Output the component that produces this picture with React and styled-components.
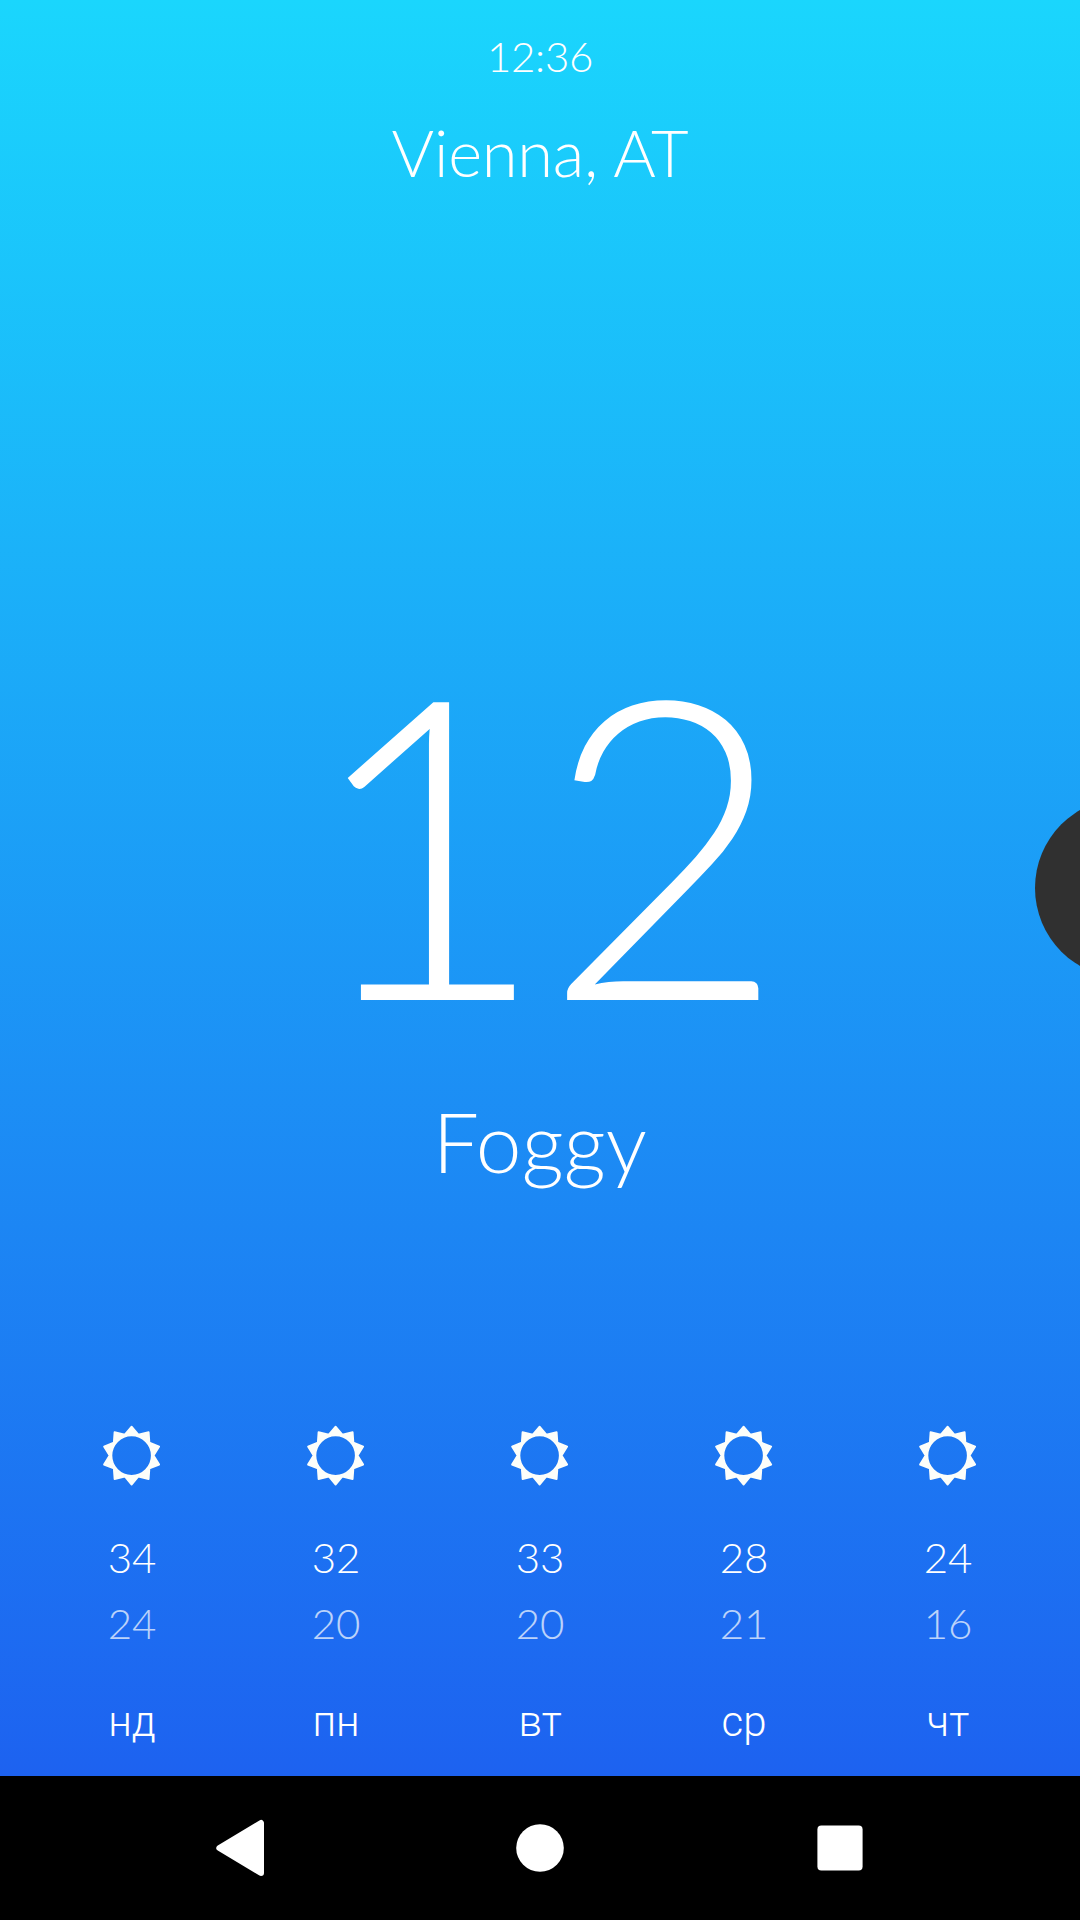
import React from "react";
import styled, { createGlobalStyle } from "styled-components";

const GlobalStyle = createGlobalStyle`
  html, body { margin: 0; padding: 0; background: #000; }
  *, *::before, *::after { box-sizing: border-box; }
`;

const Screen = styled.div`
  position: relative;
  display: flex;
  flex-direction: column;
  width: 1080px;
  height: 1920px;
  overflow: hidden;
  color: #fff;
  font-family: Lato, "Liberation Sans", sans-serif;
  font-weight: 300;
`;

const Weather = styled.main`
  flex: 1;
  display: flex;
  flex-direction: column;
  align-items: center;
  padding-top: 31px;
  background: linear-gradient(180deg, #1ad6fd 0%, #1d62f0 100%);
`;

const Clock = styled.time`
  font-size: 42px;
  line-height: 50px;
  letter-spacing: -0.3px;
`;

const City = styled.h1`
  margin: 31px 0 0;
  font-size: 65px;
  font-weight: 300;
  line-height: 80px;
  letter-spacing: -0.25px;
`;

const Temperature = styled.div`
  margin-top: 440px;
  padding-left: 6px;
  font-size: 419px;
  line-height: 412px;
  letter-spacing: -5px;
`;

const Condition = styled.div`
  margin-top: 47px;
  font-size: 82px;
  line-height: 100px;
  letter-spacing: 0.3px;
`;

const Forecast = styled.section`
  display: grid;
  grid-template-columns: repeat(5, 204px);
  margin-top: 234px;
`;

const Day = styled.article`
  display: flex;
  flex-direction: column;
  align-items: center;
`;

const SunIcon = styled.svg`
  width: 62px;
  height: 62px;
  margin: 0 1px 37px 0;
`;

const Degrees = styled.span`
  font-size: 42px;
  line-height: 66px;
  opacity: ${(p) => (p.$low ? 0.7 : 1)};
`;

const Weekday = styled.span`
  margin-top: 41px;
  font-family: Roboto, "Liberation Sans", sans-serif;
  font-size: 42px;
  line-height: 50px;
`;

const FloatingBubble = styled.div`
  position: absolute;
  top: 798px;
  left: 1035px;
  width: 180px;
  height: 180px;
  border-radius: 50%;
  background: #303030;
`;

const NavBar = styled.nav`
  display: flex;
  justify-content: center;
  align-items: center;
  height: 144px;
  background: #000;
`;

const NavButton = styled.button`
  display: flex;
  justify-content: center;
  align-items: center;
  width: 300px;
  height: 144px;
  padding: 0;
  border: 0;
  background: transparent;
`;

const days = [
  { name: "нд", high: 34, low: 24 },
  { name: "пн", high: 32, low: 20 },
  { name: "вт", high: 33, low: 20 },
  { name: "ср", high: 28, low: 21 },
  { name: "чт", high: 24, low: 16 },
];

const rays = Array.from({ length: 20 }, (_, i) => {
  const r = i % 2 ? 22 : 29;
  const a = (i * Math.PI) / 10;
  return `${(r * Math.sin(a)).toFixed(2)},${(-r * Math.cos(a)).toFixed(2)}`;
}).join("L");

const Sun = () => (
  <SunIcon viewBox="-30.6 -30.6 62 62" aria-hidden="true">
    <path
      d={`M${rays}ZM20.2,0A20.2,20.2 0 1 0 -20.2,0A20.2,20.2 0 1 0 20.2,0Z`}
      fill="#fcfefa"
      fillRule="evenodd"
      stroke="#fcfefa"
      strokeWidth="1.8"
      strokeLinejoin="round"
    />
  </SunIcon>
);

export default function App() {
  return (
    <>
      <GlobalStyle />
      <Screen>
        <Weather>
          <Clock>12:36</Clock>
          <City>Vienna, AT</City>
          <Temperature>12</Temperature>
          <Condition>Foggy</Condition>
          <Forecast>
            {days.map((d) => (
              <Day key={d.name}>
                <Sun />
                <Degrees>{d.high}</Degrees>
                <Degrees $low>{d.low}</Degrees>
                <Weekday>{d.name}</Weekday>
              </Day>
            ))}
          </Forecast>
        </Weather>
        <NavBar>
          <NavButton aria-label="Back">
            <svg width="50" height="60" viewBox="0 0 50 60">
              <path d="M4.3 30L46 5V55Z" fill="#fff" stroke="#fff" strokeWidth="6" strokeLinejoin="round" />
            </svg>
          </NavButton>
          <NavButton aria-label="Home">
            <svg width="48" height="48" viewBox="0 0 48 48">
              <circle cx="24" cy="24" r="23.8" fill="#fff" />
            </svg>
          </NavButton>
          <NavButton aria-label="Recents">
            <svg width="46" height="46" viewBox="0 0 46 46">
              <rect x="0.4" y="0.4" width="45.2" height="45.2" rx="4" fill="#fff" />
            </svg>
          </NavButton>
        </NavBar>
        <FloatingBubble />
      </Screen>
    </>
  );
}
